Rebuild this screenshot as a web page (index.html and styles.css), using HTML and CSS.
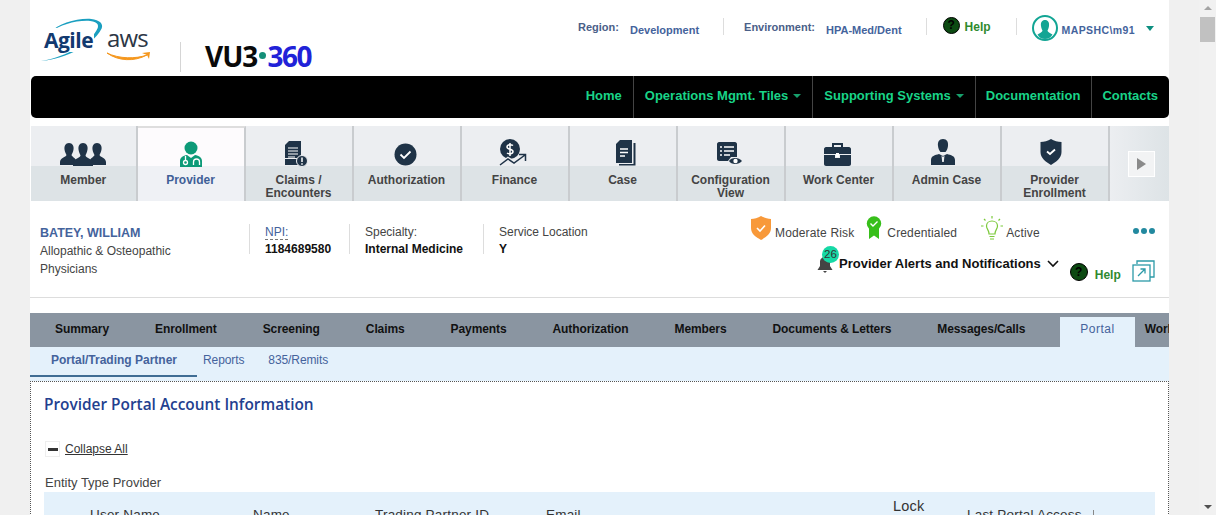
FILE: index.html
```html
<!DOCTYPE html>
<html lang="en">
<head>
    <meta charset="UTF-8">
    <meta name="viewport" content="width=device-width, initial-scale=1.0">
    <title>Provider Portal</title>
    <link rel="stylesheet" href="styles.css">
</head>
<body>
    <div class="page">
        <!-- Header -->
        <header class="header">
            <div class="logos">
                <div class="agile">
                    <svg class="swoosh" width="71" height="46" viewBox="0 0 68 48" preserveAspectRatio="none">
                        <path d="M1 45C18 44 50 32 60 11C62 6 58 2 50 1C36 0 18 6 11 15C20 7 36 2 49 3C57 4 58 8 55 13C46 30 20 42 1 45Z" fill="#1a9fc0"/>
                    </svg>
                    <span class="agile-text">Agile</span>
                </div>
                <div class="aws">
                    <span class="aws-text">aws</span>
                    <svg class="smile" width="46" height="12" viewBox="0 0 46 12">
                        <path d="M1 2C12 10 28 11 41 4C30 8 13 8 1 2Z" fill="#f5971d" stroke="#f5971d"/>
                        <path d="M36 2L44 1L43 8L41 4Z" fill="#f5971d"/>
                    </svg>
                </div>
                <div class="logo-line"></div>
                <div class="vue"><span class="vue-black">VU3</span><span class="vue-dot"></span><span class="vue-blue">360</span></div>
            </div>
            <div class="top-info">
                <span class="label region-label">Region:</span>
                <span class="value region-value">Development</span>
                <span class="top-sep sep-one"></span>
                <span class="label">Environment:</span>
                <span class="value env-value">HPA-Med/Dent</span>
                <span class="top-sep sep-two"></span>
                <span class="help-icon">?</span>
                <span class="help-text">Help</span>
                <span class="top-sep sep-three"></span>
                <svg class="avatar" width="26" height="26" viewBox="0 0 26 26">
                    <circle cx="13" cy="13" r="12" fill="#fff" stroke="#12a594" stroke-width="2"/>
                    <path d="M13 5C16 5 17.500 7.500 17 11C16.700 13 16 14.500 15.500 15.500C15.500 17 18 18 20.500 19.500C19 22.500 16 24 13 24C10 24 7 22.500 5.500 19.500C8 18 10.500 17 10.500 15.500C10 14.500 9.300 13 9 11C8.500 7.500 10 5 13 5Z" fill="#12a594"/>
                </svg>
                <span class="user-name">MAPSHC\m91</span>
                <span class="user-caret"></span>
            </div>
        </header>

        <!-- Main Nav -->
        <nav class="main-nav">
            <a>Home</a>
            <a>Operations Mgmt. Tiles<span class="nav-caret"></span></a>
            <a>Supporting Systems<span class="nav-caret"></span></a>
            <a class="nav-tight">Documentation</a>
            <a class="nav-tight">Contacts</a>
        </nav>

        <!-- Tiles -->
        <div class="tiles">
            <div class="tile">
                <div class="tile-top">
                    <svg width="46" height="24" viewBox="0 0 46 24" fill="#1f3347">
                        <path d="M9 1C12.500 1 14 4 13.500 7.500C13.200 10 12 12 11.500 13C12 15 16 16 16 19L14 23H0V20C0 16 6 15 6.500 13C6 12 4.800 10 4.500 7.500C4 4 5.500 1 9 1Z"/>
                        <path d="M37 1C40.500 1 42 4 41.500 7.500C41.200 10 40 12 39.500 13C40 15 46 16 46 20V23H32L30 19C30 16 34 15 34.500 13C34 12 32.800 10 32.500 7.500C32 4 33.500 1 37 1Z"/>
                        <path d="M23 1C26.500 1 28 4 27.500 7.500C27.200 10 26 12 25.500 13.500C26 16 33 17 33 21V24H13V21C13 17 20 16 20.500 13.500C20 12 18.800 10 18.500 7.500C18 4 19.500 1 23 1Z"/>
                    </svg>
                </div>
                <div class="tile-label">Member</div>
            </div>
            <div class="tile tile-active">
                <div class="tile-top">
                    <svg class="icon-low" width="24" height="27" viewBox="0 0 24 27">
                        <circle cx="12" cy="7" r="6.500" fill="#0d9a78"/>
                        <path d="M1 26V20C1 16.500 4 14.500 8 14L12 17L16 14C20 14.500 23 16.500 23 20V26Z" fill="#0d9a78"/>
                        <circle cx="6.500" cy="21.500" r="2" fill="none" stroke="#fff" stroke-width="1.300"/>
                        <path d="M6.500 19.500V15M14.500 24V21C14.500 17 20.500 17 20.500 21V24" fill="none" stroke="#fff" stroke-width="1.300"/>
                    </svg>
                </div>
                <div class="tile-label">Provider</div>
            </div>
            <div class="tile">
                <div class="tile-top">
                    <svg class="icon-low icon-claims" width="24" height="27" viewBox="0 0 24 27">
                        <path d="M5 1H17V18H1V5Z" fill="#1f3347"/>
                        <path d="M1 19H16V25H1Z" fill="#1f3347"/>
                        <path d="M4 8H14M4 11H14M4 14H14M4 17H11" stroke="#fff" stroke-width="1.200"/>
                        <circle cx="18" cy="21" r="5.500" fill="#1f3347" stroke="#eceef1"/>
                        <path d="M18 17.500V22M18 23.300V24.800" stroke="#fff" stroke-width="1.500"/>
                    </svg>
                </div>
                <div class="tile-label">Claims / Encounters</div>
            </div>
            <div class="tile">
                <div class="tile-top">
                    <svg class="icon-auth" width="23" height="23" viewBox="0 0 23 23">
                        <circle cx="11.500" cy="11.500" r="11" fill="#1f3347"/>
                        <path d="M6.500 11.500L10 15L16.500 8.500" fill="none" stroke="#fff" stroke-width="1.800"/>
                    </svg>
                </div>
                <div class="tile-label">Authorization</div>
            </div>
            <div class="tile">
                <div class="tile-top">
                    <svg class="icon-auth" width="28" height="27" viewBox="0 0 28 27">
                        <circle cx="11" cy="10" r="10" fill="#1f3347"/>
                        <path d="M14 6.500C12 5 8 5.500 8 8C8 11 14 9.500 14 12.500C14 15 10 15.500 8 14M11 4V17" fill="none" stroke="#fff" stroke-width="1.500"/>
                        <path d="M1 26L9 20L15 24L26 16M20 15.500H26.500V22" fill="none" stroke="#eceef1" stroke-width="4"/>
                        <path d="M1 26L9 20L15 24L26 16M20 15.500H26.500V22" fill="none" stroke="#1f3347" stroke-width="1.500"/>
                    </svg>
                </div>
                <div class="tile-label">Finance</div>
            </div>
            <div class="tile">
                <div class="tile-top">
                    <svg class="icon-case" width="21" height="27" viewBox="0 0 21 27">
                        <path d="M5 1H17V24H1V5Z" fill="#1f3347"/>
                        <path d="M18.500 4H20.500V26.500H4V25H18.500Z" fill="#1f3347"/>
                        <path d="M5 10H13M5 13.500H13M5 17H10" stroke="#fff" stroke-width="1.300"/>
                    </svg>
                </div>
                <div class="tile-label">Case</div>
            </div>
            <div class="tile">
                <div class="tile-top">
                    <svg class="icon-auth" width="27" height="25" viewBox="0 0 27 25">
                        <path d="M3 1H19C20 1 21 2 21 3V16H15L12 20H3C2 20 1 19 1 18V3C1 2 2 1 3 1Z" fill="#1f3347"/>
                        <path d="M4 6H6M8 6H18M4 10H6M8 10H18M4 14H6M8 14H14" stroke="#fff" stroke-width="1.300"/>
                        <path d="M13 20C15 16 23 16 26 20C23 24 15 24 13 20Z" fill="#1f3347"/>
                        <circle cx="19.500" cy="20" r="2.200" fill="#fff"/>
                    </svg>
                </div>
                <div class="tile-label">Configuration View</div>
            </div>
            <div class="tile">
                <div class="tile-top">
                    <svg class="icon-work" width="27" height="24" viewBox="0 0 27 24">
                        <path d="M9 6V2H18V6" fill="none" stroke="#1f3347" stroke-width="2"/>
                        <path d="M2 5H25C26 5 27 6 27 7V12H0V7C0 6 1 5 2 5Z" fill="#1f3347"/>
                        <path d="M0 13H11V16H16V13H27V22C27 23 26 24 25 24H2C1 24 0 23 0 22Z" fill="#1f3347"/>
                        <rect x="12" y="11" width="3" height="4" fill="#fff"/>
                    </svg>
                </div>
                <div class="tile-label">Work Center</div>
            </div>
            <div class="tile">
                <div class="tile-top">
                    <svg class="icon-admin" width="24" height="27" viewBox="0 0 24 27">
                        <path d="M12 0C16 0 17.500 3 17 7C16.700 10 15.500 12 14.500 13H9.500C8.500 12 7.300 10 7 7C6.500 3 8 0 12 0Z" fill="#1f3347"/>
                        <path d="M8 15L12 17L16 15C20 16 24 17 24 21V26H0V21C0 17 4 16 8 15Z" fill="#1f3347"/>
                        <path d="M10.500 16.500L12 18L13.500 16.500L12.800 23H11.200Z" fill="#eceef1"/>
                    </svg>
                </div>
                <div class="tile-label">Admin Case</div>
            </div>
            <div class="tile">
                <div class="tile-top">
                    <svg class="icon-admin icon-raise" width="22" height="26" viewBox="0 0 22 26">
                        <path d="M11 0C14 2 18 3 21.500 3V13C21.500 19 16 23 11 26C6 23 0.500 19 0.500 13V3C4 3 8 2 11 0Z" fill="#1f3347"/>
                        <path d="M7 12.500L10 15L15 10.500" fill="none" stroke="#fff" stroke-width="1.800"/>
                    </svg>
                </div>
                <div class="tile-label">Provider Enrollment</div>
            </div>
            <div class="tile-more">
                <div class="more-btn"><span class="more-arrow"></span></div>
            </div>
        </div>

        <!-- Provider Info -->
        <section class="provider">
            <div class="prov-name">
                <div class="name-link">BATEY, WILLIAM</div>
                <div class="name-sub">Allopathic &amp; Osteopathic Physicians</div>
            </div>
            <div class="prov-col col-npi">
                <div class="npi-label"><span>NPI:</span></div>
                <div class="col-value">1184689580</div>
            </div>
            <div class="prov-col col-spec">
                <div class="col-label">Specialty:</div>
                <div class="col-value">Internal Medicine</div>
            </div>
            <div class="prov-col col-loc">
                <div class="col-label">Service Location</div>
                <div class="col-value">Y</div>
            </div>
            <div class="prov-right">
                <div class="status-row">
                    <div class="status status-risk">
                        <svg width="22" height="24" viewBox="0 0 22 24">
                            <path d="M11 0C14 2 18 3 21 3V12C21 18 16 21 11 24C6 21 1 18 1 12V3C4 3 8 2 11 0Z" fill="#f8993a"/>
                            <path d="M7 12L10 15L15 9.500" fill="none" stroke="#fff" stroke-width="1.600"/>
                        </svg>
                        <span>Moderate Risk</span>
                    </div>
                    <div class="status status-cred">
                        <svg width="16" height="23" viewBox="0 0 16 23">
                            <path d="M3 11V23L8 19.500L13 23V11Z" fill="#37bf1a"/>
                            <circle cx="8" cy="7.500" r="7.200" fill="#37bf1a"/>
                            <path d="M4.500 7.500L7 10L11.500 5.500" fill="none" stroke="#fff" stroke-width="1.400"/>
                        </svg>
                        <span>Credentialed</span>
                    </div>
                    <div class="status status-active">
                        <svg width="22" height="24" viewBox="0 0 22 24" fill="none" stroke="#7bc93a" stroke-width="1.200">
                            <path d="M8 18C8 14 5.500 13 5.500 10C5.500 7 8 5 11 5C14 5 16.500 7 16.500 10C16.500 13 14 14 14 18Z"/>
                            <path d="M8.500 20.500H13.500M9 23H13M11 0V2.500M3 3L4.500 4.500M19 3L17.500 4.500M0 10H2.500M19.500 10H22"/>
                        </svg>
                        <span>Active</span>
                    </div>
                    <div class="dots"><span></span><span></span><span></span></div>
                </div>
                <div class="alert-row">
                    <div class="bell">
                        <svg width="16" height="17" viewBox="0 0 16 17">
                            <path d="M8 1C11 1 13 3 13 6V10L15.500 14H0.500L3 10V6C3 3 5 1 8 1Z" fill="#444"/>
                            <path d="M6 15H10L8 17Z" fill="#444"/>
                        </svg>
                        <span class="badge">26</span>
                    </div>
                    <span class="alert-text">Provider Alerts and Notifications</span>
                    <svg class="alert-chevron" width="12" height="8" viewBox="0 0 12 8">
                        <path d="M1 1L6 6L11 1" fill="none" stroke="#111" stroke-width="1.600"/>
                    </svg>
                    <span class="help-icon help-big">?</span>
                    <span class="help-text help-low">Help</span>
                    <svg class="popout" width="23" height="22" viewBox="0 0 23 22" fill="none" stroke="#2b9aa8" stroke-width="1.300">
                        <path d="M5 4V1H22V17H18"/>
                        <rect x="1" y="5" width="17" height="16"/>
                        <path d="M6 16L13 9M8.500 9H13V13.500"/>
                    </svg>
                </div>
            </div>
        </section>

        <!-- Tabs -->
        <div class="tabs">
            <a>Summary</a>
            <a>Enrollment</a>
            <a>Screening</a>
            <a>Claims</a>
            <a>Payments</a>
            <a>Authorization</a>
            <a>Members</a>
            <a>Documents &amp; Letters</a>
            <a>Messages/Calls</a>
            <a class="tab-active">Portal</a>
            <a class="tab-cut">Work</a>
        </div>
        <div class="subtabs">
            <a class="sub-active">Portal/Trading Partner</a>
            <a>Reports</a>
            <a>835/Remits</a>
        </div>

        <!-- Content -->
        <div class="content">
            <h2 class="content-title">Provider Portal Account Information</h2>
            <div class="collapse-row">
                <span class="collapse-btn"><span></span></span>
                <a class="collapse-link">Collapse All</a>
            </div>
            <div class="entity">Entity Type Provider</div>
            <div class="grid-head">
                <div class="th th-user">User Name</div>
                <div class="th th-name">Name</div>
                <div class="th th-trading">Trading Partner ID</div>
                <div class="th th-email">Email</div>
                <div class="th th-lock">Lock Status</div>
                <div class="th th-last">Last Portal Access</div>
                <div class="th-bar"></div>
            </div>
        </div>
    </div>

    <!-- Scrollbar -->
    <div class="scrollbar">
        <span class="scroll-up"></span>
        <div class="scroll-thumb"></div>
        <span class="scroll-down"></span>
    </div>
</body>
</html>
```

FILE: styles.css
```css
html, body {
    margin: 0;
    height: 515px;
    overflow: hidden;
}
body {
    font-family: "Liberation Sans", Arial, sans-serif;
    background-color: #f0f0f0;
    display: flex;
    color: #333;
    font-size: 12px;
}
a {
    display: block;
}
.page {
    margin-left: 30px;
    width: 1139px;
    height: 515px;
    overflow: hidden;
    background-color: white;
    flex-shrink: 0;
}

/* header */
.header {
    height: 76px;
    display: flex;
    justify-content: space-between;
}
.logos {
    display: flex;
    align-items: flex-start;
}
.agile {
    position: relative;
    width: 70px;
    height: 76px;
    margin-left: 9px;
}
.swoosh {
    position: absolute;
    left: 0;
    top: 18px;
}
.agile-text {
    position: absolute;
    left: 5px;
    top: 28px;
    font-family: "Open Sans", sans-serif;
    font-weight: 700;
    font-size: 21px;
    letter-spacing: -0.5px;
    color: #123a70;
    background: white;
    line-height: 24px;
    padding-right: 1px;
}
.aws {
    width: 50px;
    margin-top: 26px;
    margin-left: -2px;
    position: relative;
}
.aws-text {
    display: block;
    font-family: "Open Sans", sans-serif;
    font-size: 24px;
    line-height: 24px;
    letter-spacing: -0.8px;
    color: #2c3645;
}
.smile {
    position: absolute;
    left: -1px;
    top: 25px;
}
.logo-line {
    width: 1px;
    height: 30px;
    background-color: #d5d5d5;
    margin-left: 23px;
    margin-top: 42px;
}
.vue {
    display: flex;
    align-items: center;
    margin-left: 24px;
    margin-top: 42px;
    height: 27px;
    font-family: "Open Sans", sans-serif;
    font-weight: 700;
    font-size: 28px;
    letter-spacing: -1px;
}
.vue-black {
    color: #0a0a0a;
}
.vue-dot {
    width: 7px;
    height: 7px;
    border-radius: 50%;
    background-color: #148f78;
    margin-left: 2px;
    margin-right: 1px;
}
.vue-blue {
    color: #2122d8;
    letter-spacing: -1.5px;
}

.top-info {
    display: flex;
    align-items: flex-start;
    padding-right: 15px;
    height: 50px;
}
.label {
    font-size: 11px;
    font-weight: bold;
    color: #4a6088;
    margin-top: 21px;
}
.value {
    font-size: 11px;
    font-weight: bold;
    color: #44639c;
    margin-top: 24px;
    margin-left: 11px;
}
.top-sep {
    width: 1px;
    height: 17px;
    background-color: #ddd;
    margin-top: 18px;
}
.sep-one {
    margin-left: 24px;
    margin-right: 20px;
}
.sep-two {
    margin-left: 24px;
    margin-right: 16px;
}
.sep-three {
    margin-left: 25px;
    margin-right: 15px;
}
.help-icon {
    width: 17px;
    height: 17px;
    border-radius: 50%;
    background-color: #0c4a12;
    border: 1px solid #000;
    box-sizing: border-box;
    color: #000;
    font-size: 12px;
    font-weight: bold;
    line-height: 15px;
    text-align: center;
    margin-top: 17px;
}
.help-text {
    color: #2f8a2f;
    font-size: 12px;
    font-weight: bold;
    margin-left: 5px;
    margin-top: 20px;
}
.avatar {
    margin-top: 15px;
}
.user-name {
    font-size: 10.500px;
    font-weight: bold;
    color: #44639c;
    letter-spacing: 0.4px;
    margin-left: 4px;
    margin-top: 24px;
}
.user-caret {
    width: 0;
    height: 0;
    border-left: 4px solid transparent;
    border-right: 4px solid transparent;
    border-top: 5px solid #0d8f80;
    margin-left: 11px;
    margin-top: 26px;
}

/* main nav */
.main-nav {
    height: 42px;
    margin-left: 1px;
    background-color: black;
    border-radius: 5px;
    display: flex;
    justify-content: flex-end;
}
.main-nav a {
    display: flex;
    align-items: center;
    padding: 0 11px 4px 11px;
    border-left: 1px solid #444;
    color: #19d488;
    font-size: 13px;
    font-weight: bold;
}
.main-nav a:first-child {
    border-left: none;
}
.main-nav .nav-tight {
    padding-left: 10px;
}
.nav-caret {
    width: 0;
    height: 0;
    border-left: 4px solid transparent;
    border-right: 4px solid transparent;
    border-top: 4px solid #17a06c;
    margin-left: 5px;
    margin-top: 2px;
}

/* tiles */
.tiles {
    display: flex;
    margin-top: 8px;
    height: 75px;
    padding-left: 1px;
}
.tile {
    width: 108px;
    box-sizing: border-box;
    border-right: 2px solid #c9cccf;
    background-color: #dde3e6;
    flex-shrink: 0;
    display: flex;
    flex-direction: column;
    align-items: center;
}
.tile:first-child {
    width: 106.500px;
}
.tile-top {
    width: 100%;
    height: 40px;
    background-color: #eceef1;
    display: flex;
    justify-content: center;
    align-items: flex-end;
}
.icon-low {
    margin-bottom: -1px;
}
.icon-claims {
    margin-right: 5px;
}
.icon-auth {
    margin-right: 3px;
}
.icon-case {
    margin-left: 6px;
}
.icon-work {
    margin-right: 2px;
}
.icon-admin {
    margin-right: 8px;
}
.icon-raise {
    margin-bottom: 1px;
}
.tile-label {
    padding-top: 8px;
    text-align: center;
    width: 90px;
    font-size: 12px;
    font-weight: bold;
    line-height: 13px;
    color: #444;
}
.tile-active {
    background-color: #eff1f5;
    border-top: 2px solid #dedede;
}
.tile-active .tile-top {
    background-color: #fdfbfd;
    height: 38px;
}
.tile-active .icon-low {
    margin-bottom: -2px;
}
.tile-active .tile-label {
    color: #3f5f97;
}
.tile-more {
    flex: 1;
    background: linear-gradient(90deg, #eceef1, #dde3e6);
    display: flex;
    align-items: center;
    justify-content: center;
    padding-left: 5px;
}
.more-btn {
    width: 27px;
    height: 26px;
    box-sizing: border-box;
    background-color: #f2f3f4;
    border: 1px solid #fff;
    display: flex;
    align-items: center;
    justify-content: center;
}
.more-arrow {
    width: 0;
    height: 0;
    border-top: 6px solid transparent;
    border-bottom: 6px solid transparent;
    border-left: 9px solid #8a8a8a;
}

/* provider block */
.provider {
    height: 97px;
    border-bottom: 1px solid #ddd;
    box-sizing: border-box;
    display: flex;
    align-items: flex-start;
}
.prov-name {
    width: 219px;
    padding-left: 10px;
    padding-top: 24px;
    box-sizing: border-box;
    flex-shrink: 0;
}
.name-link {
    color: #44639c;
    font-size: 12.500px;
    font-weight: bold;
    line-height: 16px;
}
.name-sub {
    width: 145px;
    color: #444;
    line-height: 18px;
    margin-top: 1px;
}
.prov-col {
    margin-top: 23px;
    height: 30px;
    box-sizing: border-box;
    border-left: 1px solid #ddd;
    padding-left: 15px;
    flex-shrink: 0;
}
.col-npi {
    width: 100px;
}
.col-spec {
    width: 134px;
}
.col-loc {
    width: 210px;
}
.col-label, .npi-label {
    color: #444;
    line-height: 16px;
}
.npi-label {
    color: #44639c;
}
.npi-label span {
    border-bottom: 1px dashed #777;
}
.col-value {
    color: #111;
    font-weight: bold;
    line-height: 16px;
    margin-top: 1px;
}
.prov-right {
    flex: 1;
    margin-left: 57px;
}
.status-row {
    display: flex;
    align-items: flex-end;
    margin-top: 15px;
    height: 24px;
}
.status {
    display: flex;
    align-items: flex-end;
    color: #444;
}
.status span {
    line-height: 14px;
    margin-left: 3px;
    letter-spacing: 0.15px;
}
.status-cred {
    margin-left: 12px;
}
.status-cred svg {
    margin-bottom: 1px;
}
.status-cred span {
    margin-left: 5px;
}
.status-active {
    margin-left: 24px;
}
.dots {
    display: flex;
    gap: 2px;
    margin-left: auto;
    margin-right: 14px;
    margin-bottom: 6px;
}
.dots span {
    width: 6px;
    height: 6px;
    border-radius: 50%;
    background-color: #22899f;
}
.alert-row {
    display: flex;
    align-items: flex-start;
    margin-left: 67px;
    margin-top: 8px;
}
.bell {
    position: relative;
    width: 16px;
    height: 17px;
    margin-top: 8px;
}
.badge {
    position: absolute;
    left: 5px;
    top: -10px;
    width: 17px;
    height: 17px;
    border-radius: 50%;
    background-color: #16d9a6;
    color: #333;
    font-size: 11.500px;
    line-height: 17px;
    text-align: center;
}
.alert-text {
    color: #111;
    font-size: 13px;
    font-weight: bold;
    margin-left: 6px;
    margin-top: 8px;
    line-height: 16px;
}
.alert-chevron {
    margin-left: 6px;
    margin-top: 12px;
}
.help-big {
    width: 18px;
    height: 18px;
    line-height: 16px;
    margin-top: 15px;
    margin-left: 11px;
}
.help-low {
    margin-left: 7px;
    margin-top: 20px;
}
.popout {
    margin-left: 11px;
    margin-top: 12px;
}

/* tabs */
.tabs {
    margin-top: 15px;
    height: 34px;
    background-color: #8a95a1;
    display: flex;
    align-items: flex-end;
    overflow: hidden;
    padding-left: 5px;
    gap: 6px;
}
.tabs a {
    padding: 0 20px;
    height: 30px;
    line-height: 25px;
    color: #111;
    font-weight: bold;
    letter-spacing: -0.1px;
    white-space: nowrap;
}
.tabs .tab-active {
    background-color: #e4f1fb;
    color: #44639c;
    font-weight: normal;
    letter-spacing: 0.5px;
    margin-left: 9px;
}
.tabs .tab-cut {
    padding: 0 0 0 4px;
}
.subtabs {
    height: 34px;
    background-color: #e4f1fb;
    display: flex;
}
.subtabs a {
    color: #44639c;
    line-height: 26px;
    padding: 0 12px;
    letter-spacing: -0.1px;
}
.subtabs .sub-active {
    font-weight: bold;
    letter-spacing: 0;
    padding: 0 20px 0 21px;
    height: 28px;
    border-bottom: 2px solid #3f6d94;
}
.subtabs .sub-active + a {
    margin-left: -6px;
}

/* content */
.content {
    border: 1px dotted #555;
    border-bottom: none;
    padding: 0 13px;
    height: 140px;
}
.content-title {
    margin: 13px 0 0;
    font-family: "Open Sans", sans-serif;
    font-size: 15.400px;
    font-weight: 600;
    line-height: 20px;
    color: #23408f;
}
.collapse-row {
    display: flex;
    align-items: center;
    margin-top: 26px;
    margin-left: 1px;
}
.collapse-btn {
    width: 13px;
    height: 14px;
    border: 1px solid #eee;
    display: flex;
    align-items: center;
    justify-content: center;
}
.collapse-btn span {
    width: 10px;
    height: 3px;
    background-color: #333;
}
.collapse-link {
    margin-left: 5px;
    color: #333;
    text-decoration: underline;
    line-height: 16px;
}
.entity {
    margin-top: 18px;
    margin-left: 1px;
    color: #444;
    line-height: 16px;
    font-size: 13px;
}
.grid-head {
    margin-top: 1px;
    height: 50px;
    background-color: #e4f1fb;
    display: grid;
    grid-template-columns: 46px 163px 122px 171px 347px 74px 126px 1px;
    align-items: start;
}
.th {
    grid-row: 1;
    color: #333;
    line-height: 14px;
    font-size: 13.500px;
    letter-spacing: 0.2px;
    padding-top: 16px;
}
.th-user {
    grid-column: 2;
}
.th-name {
    grid-column: 3;
}
.th-trading {
    grid-column: 4;
}
.th-email {
    grid-column: 5;
}
.th-lock {
    grid-column: 6;
    padding-top: 6px;
    font-size: 14.500px;
    line-height: 16px;
    width: 40px;
}
.th-last {
    grid-column: 7;
    white-space: nowrap;
}
.th-bar {
    grid-row: 1;
    grid-column: 8;
    width: 1px;
    height: 14px;
    margin-top: 18px;
    background-color: #888;
}

/* scrollbar */
.scrollbar {
    width: 17px;
    height: 515px;
    margin-left: 30px;
    flex-shrink: 0;
    background-color: #f1f1f1;
    display: flex;
    flex-direction: column;
    align-items: center;
}
.scroll-up, .scroll-down {
    width: 0;
    height: 0;
    border-left: 4px solid transparent;
    border-right: 4px solid transparent;
}
.scroll-up {
    margin-top: 6px;
    border-bottom: 4px solid #a3a3a3;
}
.scroll-thumb {
    width: 15px;
    height: 25px;
    margin-top: 7px;
    background-color: #c1c1c1;
}
.scroll-down {
    margin-top: auto;
    margin-bottom: 6px;
    border-top: 4px solid #505050;
}
```
